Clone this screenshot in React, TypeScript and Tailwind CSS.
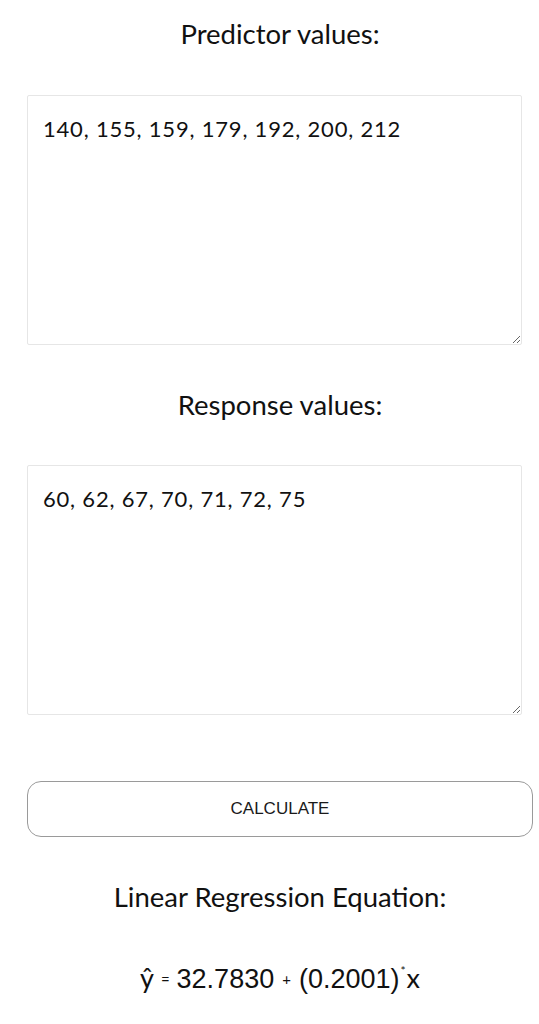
import React from "react";

const heading = "text-center text-[27.5px] leading-[30px] text-[#111] font-['Lato',sans-serif]";
const area =
  "block w-[495px] h-[250px] border border-[#e6e6e6] rounded-[2px] bg-white px-[15px] py-[18px] text-[22px] leading-[30px] tracking-[0.8px] text-[#111] font-['Lato',sans-serif] outline-none";

export default function App() {
  return (
    <div className="bg-white min-h-[1024px] w-[539px] overflow-hidden">
      <div className="ml-[27px] w-[506px] flex flex-col">
        <h2 className={`${heading} mt-[19px]`}>Predictor values:</h2>
        <textarea className={`${area} mt-[46px]`} defaultValue="140, 155, 159, 179, 192, 200, 212" />
        <h2 className={`${heading} mt-[45px]`}>Response values:</h2>
        <textarea className={`${area} mt-[45px]`} defaultValue="60, 62, 67, 70, 71, 72, 75" />
        <button className="mt-[66px] h-[56px] w-full rounded-[14px] border border-[#9a9a9a] bg-white text-[17px] text-[#1a1a1a] font-['Liberation_Sans',Arial,sans-serif]">
          CALCULATE
        </button>
        <h2 className={`${heading} mt-[45px]`}>Linear Regression Equation:</h2>
        <div className="mt-[46px] flex items-baseline justify-center text-[#111]">
          <span className="font-['Lato',sans-serif] text-[27px]">ŷ</span>
          <span className="font-['Lato',sans-serif] text-[15px] mx-[7px] relative -top-[3px]">=</span>
          <span className="font-['Liberation_Sans',Arial,sans-serif] text-[27px]">32.7830</span>
          <span className="font-['Lato',sans-serif] text-[15px] mx-[8px] relative -top-[3px]">+</span>
          <span className="font-['Liberation_Sans',Arial,sans-serif] text-[27px]">(0.2001)</span>
          <span className="font-['Lato',sans-serif] text-[12px] self-start mt-[4px] mx-[1px]">*</span>
          <span className="font-['Lato',sans-serif] text-[27px]">x</span>
        </div>
      </div>
    </div>
  );
}
